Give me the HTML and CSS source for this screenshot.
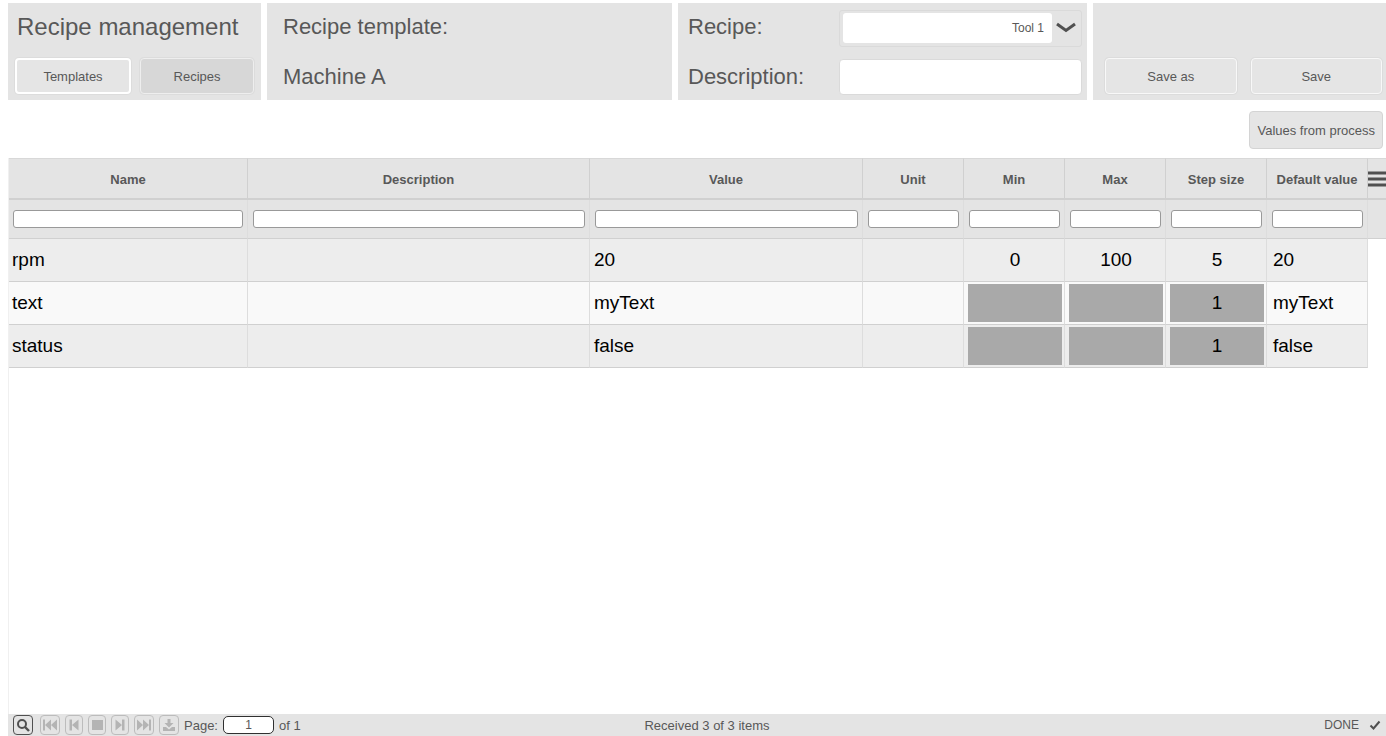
FILE: index.html
```
<!DOCTYPE html>
<html lang="en">
<head>
<meta charset="UTF-8">
<title>Recipe management</title>
<link rel="stylesheet" href="styles.css">
</head>
<body>

<!-- Top panels -->
<header class="toolbar">
    <div class="panel panel-title">
        <h1 class="title">Recipe management</h1>
        <div class="button-row">
            <button type="button" class="btn btn-bright">Templates</button>
            <button type="button" class="btn btn-active">Recipes</button>
        </div>
    </div>

    <div class="panel panel-template">
        <div class="caption">Recipe template:</div>
        <div class="caption">Machine A</div>
    </div>

    <div class="panel panel-recipe">
        <label class="caption" for="recipe">Recipe:</label>
        <div class="select-box">
            <select id="recipe" name="recipe">
                <option>Tool 1</option>
            </select>
            <svg class="chevron" viewBox="0 0 20 12"><path d="M1 2L10 8.500L19 2" /></svg>
        </div>
        <label class="caption" for="description">Description:</label>
        <input type="text" id="description" name="description" class="text-box">
    </div>

    <div class="panel panel-save">
        <div class="button-row">
            <button type="button" class="btn">Save as</button>
            <button type="button" class="btn">Save</button>
        </div>
    </div>
</header>

<div class="actions">
    <button type="button" class="btn btn-process">Values from process</button>
</div>

<!-- Recipe values -->
<main class="grid">
    <table>
        <colgroup>
            <col class="col-name">
            <col>
            <col class="col-value">
            <col class="col-small">
            <col class="col-small">
            <col class="col-small">
            <col class="col-small">
            <col class="col-small">
            <col class="col-menu">
        </colgroup>
        <thead>
            <tr class="head-row">
                <th>Name</th>
                <th>Description</th>
                <th>Value</th>
                <th>Unit</th>
                <th>Min</th>
                <th>Max</th>
                <th>Step size</th>
                <th>Default value</th>
                <th class="menu-cell">
                    <button type="button" class="menu-btn" aria-label="Columns">
                        <svg viewBox="0 0 18 16"><path d="M0 2H18M0 8H18M0 14H18" /></svg>
                    </button>
                </th>
            </tr>
            <tr class="filter-row">
                <td><input type="text" aria-label="Filter name"></td>
                <td><input type="text" aria-label="Filter description"></td>
                <td><input type="text" aria-label="Filter value"></td>
                <td><input type="text" aria-label="Filter unit"></td>
                <td><input type="text" aria-label="Filter min"></td>
                <td><input type="text" aria-label="Filter max"></td>
                <td><input type="text" aria-label="Filter step size"></td>
                <td><input type="text" aria-label="Filter default value"></td>
                <td></td>
            </tr>
        </thead>
        <tbody>
            <tr>
                <td>rpm</td>
                <td></td>
                <td>20</td>
                <td></td>
                <td class="number"><div>0</div></td>
                <td class="number"><div>100</div></td>
                <td class="number"><div>5</div></td>
                <td class="default">20</td>
                <td class="empty"></td>
            </tr>
            <tr>
                <td>text</td>
                <td></td>
                <td>myText</td>
                <td></td>
                <td class="number locked"><div></div></td>
                <td class="number locked"><div></div></td>
                <td class="number locked"><div>1</div></td>
                <td class="default">myText</td>
                <td class="empty"></td>
            </tr>
            <tr>
                <td>status</td>
                <td></td>
                <td>false</td>
                <td></td>
                <td class="number locked"><div></div></td>
                <td class="number locked"><div></div></td>
                <td class="number locked"><div>1</div></td>
                <td class="default">false</td>
                <td class="empty"></td>
            </tr>
        </tbody>
    </table>
</main>

<!-- Paging bar -->
<footer class="pager">
    <div class="pager-left">
        <button type="button" class="icon-btn search" aria-label="Search">
            <svg viewBox="0 0 16 16"><circle cx="7" cy="7" r="4" fill="none" stroke="currentColor" stroke-width="2" /><path d="M10 10L14 14" fill="none" stroke="currentColor" stroke-width="2.4" /></svg>
        </button>
        <button type="button" class="icon-btn" aria-label="First page" disabled>
            <svg viewBox="0 0 16 16"><path d="M1 2.500h2v11h-2zM9 2.500v11L3 8zM15 2.500v11L9 8z" /></svg>
        </button>
        <button type="button" class="icon-btn narrow" aria-label="Previous page" disabled>
            <svg viewBox="0 0 16 16"><path d="M3.500 2.500h2.500v11h-2.500zM12.500 2.500v11L6 8z" /></svg>
        </button>
        <button type="button" class="icon-btn narrow" aria-label="Stop" disabled>
            <svg viewBox="0 0 16 16"><path d="M3 3h11v10h-11z" /></svg>
        </button>
        <button type="button" class="icon-btn narrow" aria-label="Next page" disabled>
            <svg viewBox="0 0 16 16"><path d="M12.500 2.500h-2.500v11h2.500zM3.500 2.500v11L10 8z" /></svg>
        </button>
        <button type="button" class="icon-btn" aria-label="Last page" disabled>
            <svg viewBox="0 0 16 16"><path d="M15 2.500h-2v11h2zM7 2.500v11L13 8zM1 2.500v11L7 8z" /></svg>
        </button>
        <button type="button" class="icon-btn" aria-label="Export" disabled>
            <svg viewBox="0 0 16 16"><path d="M6.500 2h3v4h3L8 10.500 3.500 6h3zM2 10h3l3 2.500 3-2.500h3v4h-12z" /></svg>
        </button>
        <label for="page">Page:</label>
        <input type="text" id="page" name="page" value="1">
        <span>of 1</span>
    </div>
    <div class="pager-info">Received 3 of 3 items</div>
    <div class="pager-status">
        <span>DONE</span>
        <svg viewBox="0 0 12 12"><path d="M1.500 6.500L4.500 9.500L10.500 2.500" /></svg>
    </div>
</footer>

</body>
</html>
```
FILE: styles.css
```
:root {
    --panel: #e4e4e4;
    --line: #d0d0d0;
    --text: #585858;
}

* {
    box-sizing: border-box;
}

body {
    display: flex;
    flex-direction: column;
    min-height: 100vh;
    margin: 0;
    padding: 3px 0 0 8px;
    background: white;
    color: var(--text);
    font-family: "Liberation Sans", Arial, sans-serif;
    font-size: 13px;
}

button, input, select {
    font-family: inherit;
    color: inherit;
}

.toolbar {
    display: grid;
    grid-template-columns: 253fr 405fr 409fr 293fr;
    gap: 6px;
}

.panel {
    min-height: 97px;
    background: var(--panel);
}

.title {
    margin: 0;
    padding: 0 2px;
    font-size: 24px;
    font-weight: normal;
    line-height: 48px;
    white-space: nowrap;
}

.caption {
    font-size: 22px;
    line-height: 47px;
    white-space: nowrap;
}

.panel-title {
    padding: 0 7px;
}

.panel-template {
    display: grid;
    grid-template-rows: 50px 47px;
    padding: 0 16px;
}

.button-row {
    display: flex;
    gap: 9px;
    padding-top: 7px;
}

.btn {
    flex: 1;
    height: 36px;
    padding: 0;
    background: #e5e5e5;
    border: 1px solid #f8f8f8;
    border-radius: 4px;
    box-shadow: 0 0 0 1px #dcdcdc;
    font-size: 13px;
    cursor: pointer;
}

.btn-bright {
    border: 2px solid white;
}

.btn-active {
    background: #d7d7d7;
    border-color: #eeeeee;
}

.panel-recipe {
    display: grid;
    grid-template-columns: 151px 1fr;
    grid-template-rows: 50px 47px;
    align-items: center;
    padding: 0 5px 0 10px;
}

.panel-recipe .caption {
    align-self: start;
}

.select-box {
    display: flex;
    align-items: center;
    height: 37px;
    padding: 3px;
    border: 1px solid #dadada;
    border-radius: 3px;
}

.select-box select {
    flex: 1;
    min-width: 0;
    height: 30px;
    padding: 0 8px;
    background: white;
    border: none;
    border-radius: 3px;
    appearance: none;
    font-size: 12px;
    text-align-last: right;
}

.chevron {
    width: 20px;
    height: 12px;
    margin: 0 2px 0 4px;
    fill: none;
    stroke: #505050;
    stroke-width: 3;
}

.text-box {
    min-width: 0;
    height: 36px;
    padding: 0 8px;
    background: white;
    border: 1px solid #dadada;
    border-radius: 4px;
    font-size: 12px;
}

.panel-save {
    display: flex;
    align-items: flex-end;
    padding: 0 4px 6px 12px;
}

.panel-save .button-row {
    flex: 1;
    gap: 14px;
}

.actions {
    display: flex;
    justify-content: flex-end;
    padding: 11px 3px 9px;
}

.btn-process {
    flex: none;
    height: 38px;
    padding: 0 7px;
    border-color: #d4d4d4;
    box-shadow: none;
}

/* Table */

.grid {
    flex: 1;
    border-left: 1px solid #f0f0f0;
}

table {
    width: 100%;
    table-layout: fixed;
    border-collapse: separate;
    border-spacing: 0;
}

.col-name {
    width: 239px;
}

.col-value {
    width: 273px;
}

.col-small {
    width: 101px;
}

.col-menu {
    width: 18px;
}

th, td {
    height: 43px;
    padding: 0 4px;
    border-right: 1px solid #dddddd;
    border-bottom: 1px solid var(--line);
}

thead {
    background: var(--panel);
}

.head-row th {
    height: 42px;
    padding: 2px 0 0;
    border-top: 1px solid #d8d8d8;
    border-right-color: var(--line);
    border-bottom: 2px solid var(--line);
    white-space: nowrap;
}

.head-row .menu-cell {
    padding: 0;
    border-right: none;
}

.menu-btn {
    display: block;
    width: 100%;
    padding: 0;
    background: none;
    border: none;
    cursor: pointer;
}

.menu-btn svg {
    display: block;
    width: 18px;
    height: 16px;
    stroke: #505050;
    stroke-width: 3;
}

.filter-row td {
    height: 39px;
    padding: 0 4px 0 5px;
}

.filter-row td:first-child {
    padding-left: 4px;
}

.filter-row td:last-child {
    border-right: none;
}

.filter-row input {
    display: block;
    width: 100%;
    height: 18px;
    padding: 0 4px;
    background: white;
    border: 1px solid #999999;
    border-radius: 3px;
    font-size: 12px;
}

tbody td {
    background: #ededed;
    color: black;
    font-size: 19px;
    line-height: 38px;
}

tbody tr:nth-child(even) td {
    background: #f9f9f9;
}

tbody td:first-child {
    padding-left: 3px;
}

tbody td.number {
    padding: 0 2px 0 4px;
    text-align: center;
}

tbody td.default {
    padding-left: 6px;
}

.number div {
    height: 38px;
}

.locked div {
    background: #a9a9a9;
}

tbody tr td.empty {
    background: white;
    border: none;
}

/* Bottom bar */

.pager {
    display: grid;
    grid-template-columns: 1fr auto 1fr;
    align-items: center;
    height: 22px;
    padding: 0 5px;
    background: var(--panel);
}

.pager-left {
    display: flex;
    align-items: center;
    gap: 5px;
}

.pager-info {
    padding-left: 20px;
}

.icon-btn {
    width: 20px;
    height: 20px;
    padding: 0;
    background: none;
    border: 1px solid #bcbcbc;
    border-radius: 4px;
    color: #b4b4b4;
}

.icon-btn.narrow {
    width: 18px;
}

.icon-btn.search {
    margin-right: 2px;
    border-color: #505050;
    color: #505050;
}

.icon-btn svg {
    display: block;
    width: 16px;
    height: 16px;
    margin: 0 auto;
    fill: currentColor;
}

.pager-left input {
    width: 51px;
    height: 18px;
    padding: 0;
    background: white;
    border: 1px solid #303030;
    border-radius: 5px;
    font-size: 12px;
    text-align: center;
}

.pager-status {
    display: flex;
    justify-content: flex-end;
    align-items: center;
    gap: 10px;
    font-size: 12px;
}

.pager-status svg {
    width: 12px;
    height: 12px;
    fill: none;
    stroke: #505050;
    stroke-width: 2;
}
```
